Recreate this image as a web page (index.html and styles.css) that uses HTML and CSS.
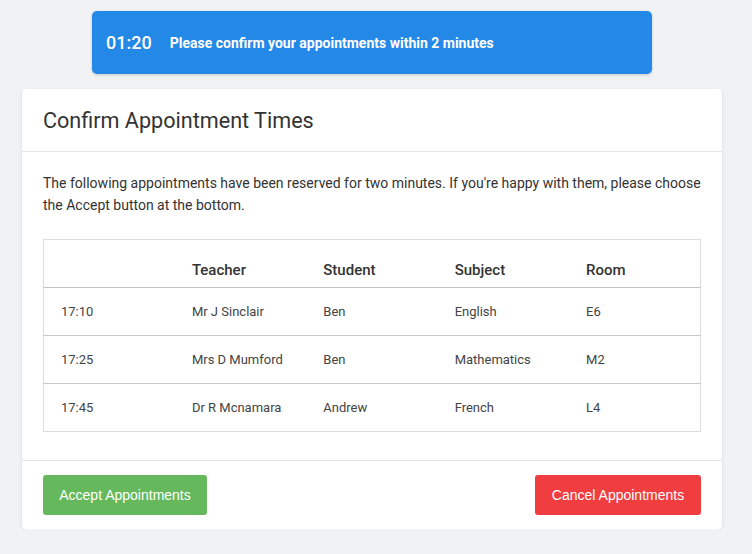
FILE: index.html
```html
<!DOCTYPE html>
<html>
<head>
<meta charset="utf-8">
<link rel="stylesheet" href="styles.css">
</head>
<body>
<div class="page">
  <div class="timer">
    <span class="timer-count">01:20</span>
    <span class="timer-msg">Please confirm your appointments within 2 minutes</span>
  </div>
  <div class="card">
    <div class="card-header">
      <h1 class="card-title">Confirm Appointment Times</h1>
    </div>
    <div class="card-body">
      <p class="intro">The following appointments have been reserved for two minutes. If you're happy with them, please choose the Accept button at the bottom.</p>
      <table class="appts">
        <thead>
          <tr><th></th><th>Teacher</th><th>Student</th><th>Subject</th><th>Room</th></tr>
        </thead>
        <tbody>
          <tr><td>17:10</td><td>Mr J Sinclair</td><td>Ben</td><td>English</td><td>E6</td></tr>
          <tr><td>17:25</td><td>Mrs D Mumford</td><td>Ben</td><td>Mathematics</td><td>M2</td></tr>
          <tr><td>17:45</td><td>Dr R Mcnamara</td><td>Andrew</td><td>French</td><td>L4</td></tr>
        </tbody>
      </table>
    </div>
    <div class="card-footer">
      <button class="btn btn-accept">Accept Appointments</button>
      <button class="btn btn-cancel">Cancel Appointments</button>
    </div>
  </div>
</div>
</body>
</html>
```
FILE: styles.css
```css
html, body {
  margin: 0;
  padding: 0;
  background: #f1f2f4;
}
body {
  font-family: Roboto, "Noto Sans", sans-serif;
  color: #333;
}
.page {
  padding: 11px 30px 0 22px;
  display: flex;
  flex-direction: column;
  align-items: flex-start;
}
.timer {
  margin-left: 70px;
  width: 560px;
  height: 63px;
  box-sizing: border-box;
  background: #2388e6;
  border-radius: 5px;
  box-shadow: 0 1px 3px rgba(0,0,0,0.18);
  display: flex;
  align-items: center;
  padding-left: 14px;
  color: #fff;
}
.timer-count {
  font-size: 18px;
  font-weight: 500;
  margin-right: 18px;
}
.timer-msg {
  font-size: 14px;
  font-weight: 700;
}
.card {
  margin-top: 15px;
  width: 700px;
  background: #fff;
  border-radius: 4px;
  box-shadow: 0 1px 3px rgba(0,0,0,0.14);
}
.card-header {
  height: 63px;
  box-sizing: border-box;
  border-bottom: 1px solid #e6e6e6;
  padding: 0 21px;
  display: flex;
  align-items: center;
}
.card-title {
  margin: 0;
  font-size: 21.6px;
  font-weight: 400;
  color: #333;
}
.card-body {
  padding: 20px 21px 28px;
}
.intro {
  margin: 0 0 23px;
  font-size: 14px;
  line-height: 22px;
  color: #333;
}
.appts {
  width: 100%;
  table-layout: fixed;
  border-collapse: collapse;
  border: 1px solid #dcdcdc;
}
.appts th {
  height: 48px;
  box-sizing: border-box;
  text-align: left;
  vertical-align: bottom;
  padding: 0 17px 8px;
  font-size: 15px;
  font-weight: 500;
  color: #333;
  border-bottom: 1px solid #c4c4c4;
}
.appts td {
  height: 48px;
  box-sizing: border-box;
  padding: 0 17px;
  font-size: 13px;
  color: #444;
  border-bottom: 1px solid #c8c8c8;
}
.appts tbody tr:last-child td {
  border-bottom: 1px solid #dcdcdc;
}
.card-footer {
  border-top: 1px solid #e2e2e2;
  padding: 14px 21px 14px;
  display: flex;
  justify-content: space-between;
}
.btn {
  height: 40px;
  border: none;
  border-radius: 3px;
  padding: 0 15px;
  font-family: "Liberation Sans", Arial, sans-serif;
  font-size: 14px;
  color: #fff;
}
.btn-accept {
  background: #65b95c;
  width: 164px;
}
.btn-cancel {
  background: #f03d3f;
  width: 166px;
}
```
